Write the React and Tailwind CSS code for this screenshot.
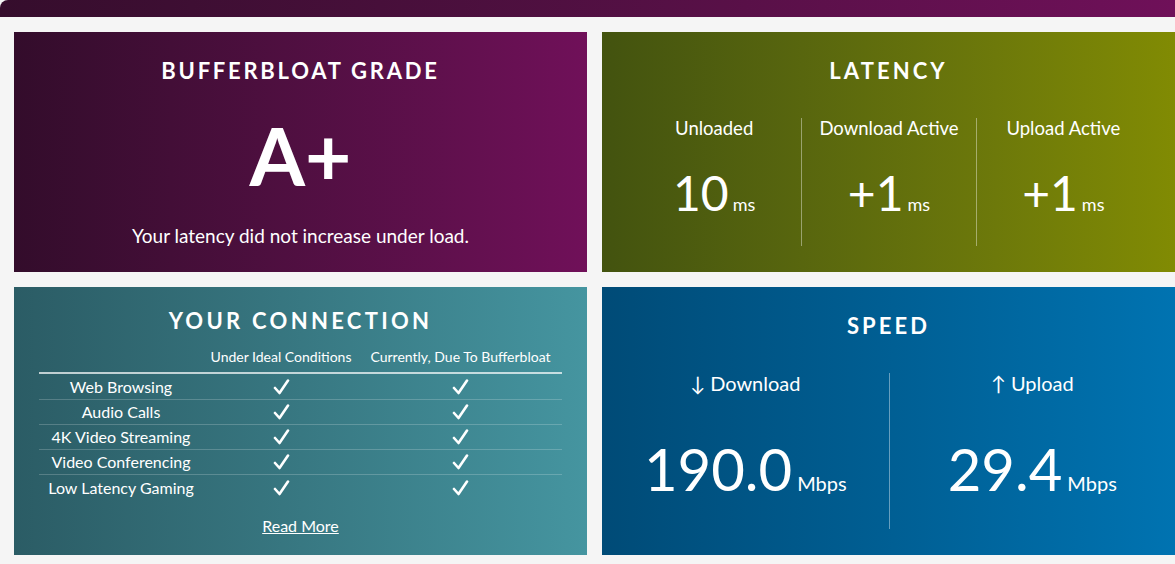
import React from 'react';

const font = { fontFamily: 'Lato, "Open Sans", sans-serif' };

const Title = ({ children, className = '' }) => (
  <h2 className={`text-white font-bold text-[22px] leading-[28px] text-center ${className}`}>
    {children}
  </h2>
);

const rows = [
  'Web Browsing',
  'Audio Calls',
  '4K Video Streaming',
  'Video Conferencing',
  'Low Latency Gaming',
];

const Check = () => (
  <span className="flex justify-center">
    <svg width="17" height="16" viewBox="0 0 17 16" fill="none">
      <path d="M2 9 L6.5 14 L15 1.5" stroke="white" strokeWidth="2.6" strokeLinecap="round" strokeLinejoin="round" />
    </svg>
  </span>
);

export default function App() {
  return (
    <div className="min-h-screen bg-[#f5f5f5] overflow-hidden" style={font}>
      <div className="h-[17px] rounded-tl-[8px] bg-gradient-to-r from-[#350d2c] to-[#6f1059]" />

      <div className="grid grid-cols-[573px_573px] gap-[15px] pl-[14px] pt-[15px] pb-[9px]">
        {/* grade */}
        <div className="h-[240px] bg-gradient-to-r from-[#330c2b] to-[#701059] flex flex-col items-center pt-[25px] text-white">
          <Title className="tracking-[0.125em]">BUFFERBLOAT GRADE</Title>
          <div className="mt-[30px] text-[80px] leading-[80px] font-bold">A+</div>
          <p className="mt-[29px] text-[19px] leading-[24px]">Your latency did not increase under load.</p>
        </div>

        {/* latency */}
        <div className="h-[240px] bg-gradient-to-r from-[#43530f] to-[#818b03] flex flex-col pt-[25px] px-[25px] text-white">
          <Title className="tracking-[0.14em]">LATENCY</Title>
          <div className="mt-[33px] grid grid-cols-3 h-[128px]">
            {[
              ['Unloaded', '10'],
              ['Download Active', '+1'],
              ['Upload Active', '+1'],
            ].map(([label, val], i) => (
              <div
                key={label}
                className={`flex flex-col items-center ${i > 0 ? 'border-l border-white/40' : ''}`}
              >
                <span className="-mt-[2px] text-[18.5px] leading-[24px]">{label}</span>
                <div className="mt-[25px] flex items-baseline">
                  <span className="text-[48px] leading-[56px]">{val}</span>
                  <span className="ml-[4px] text-[18px]">ms</span>
                </div>
              </div>
            ))}
          </div>
        </div>

        {/* connection */}
        <div className="h-[268px] bg-gradient-to-r from-[#2b5c65] to-[#4595a0] flex flex-col pt-[20px] px-[25px] text-white">
          <Title className="tracking-[0.15em]">YOUR CONNECTION</Title>
          <div className="mt-[12px] grid grid-cols-[164px_156px_1fr] text-[14px] leading-[20px] text-center pb-[5px] border-b-2 border-white/70">
            <span />
            <span>Under Ideal Conditions</span>
            <span>Currently, Due To Bufferbloat</span>
          </div>
          <div className="pt-[1px]">
            {rows.map((r, i) => (
              <div
                key={r}
                className={`grid grid-cols-[164px_156px_1fr] h-[25px] items-center text-center text-[16px] ${
                  i < rows.length - 1 ? 'border-b border-white/20' : ''
                }`}
              >
                <span>{r}</span>
                <Check />
                <Check />
              </div>
            ))}
          </div>
          <a href="#" className="mt-[15px] self-center underline text-[16px] leading-[22px]">
            Read More
          </a>
        </div>

        {/* speed */}
        <div className="h-[268px] bg-gradient-to-r from-[#004b77] to-[#0073b1] flex flex-col pt-[25px] text-white">
          <Title className="tracking-[0.14em]">SPEED</Title>
          <div className="mt-[33px] grid grid-cols-2 h-[156px]">
            {[
              ['↓ Download', '190.0'],
              ['↑ Upload', '29.4'],
            ].map(([label, val], i) => (
              <div
                key={label}
                className={`flex flex-col items-center ${i > 0 ? 'border-l border-white/40' : ''}`}
              >
                <span className="-mt-[2px] text-[20px] leading-[24px]">{label}</span>
                <div className="mt-[42px] flex items-baseline">
                  <span className="text-[58px] leading-[64px]">{val}</span>
                  <span className="ml-[5px] text-[20px]">Mbps</span>
                </div>
              </div>
            ))}
          </div>
        </div>
      </div>
    </div>
  );
}
